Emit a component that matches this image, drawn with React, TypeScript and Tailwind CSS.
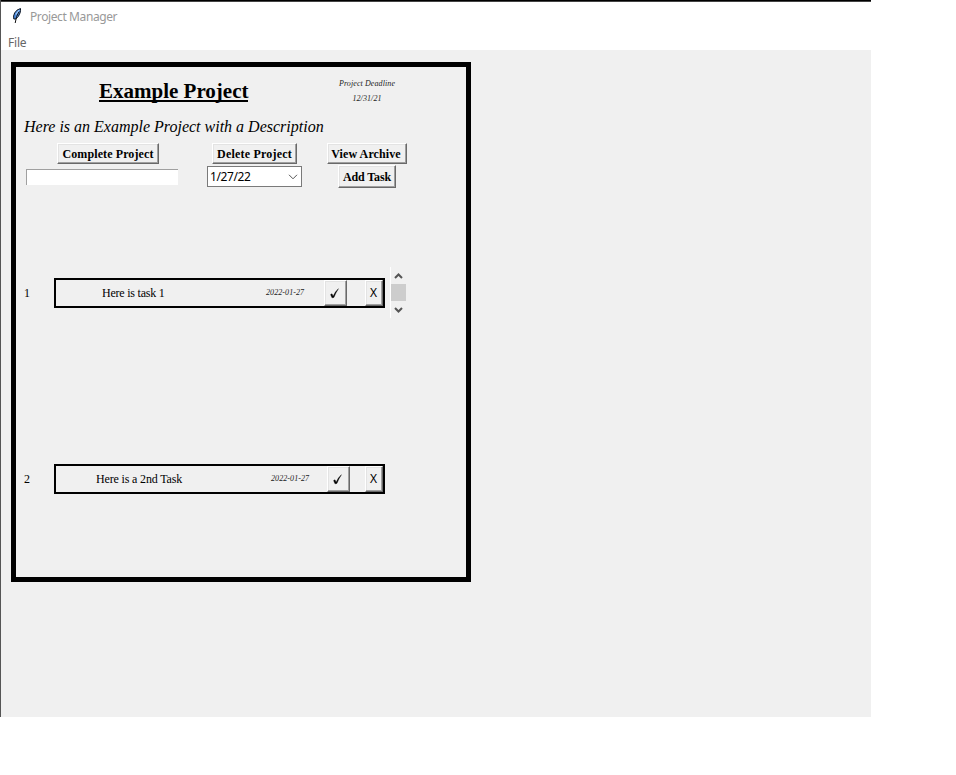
import type { ReactNode } from "react";

const serif = "font-['Liberation_Serif',serif]";
const sans = "font-['Noto_Sans','Open_Sans',sans-serif]";

function RaisedButton({ className, children }: { className: string; children: ReactNode }) {
  return (
    <button
      className={`flex shrink-0 items-center justify-center border border-t-white border-l-white border-r-[#696969] border-b-[#696969] bg-[#f0f0f0] whitespace-nowrap text-black shadow-[inset_-1px_-1px_0_#a0a0a0,inset_1px_1px_0_#e3e3e3] ${className}`}
    >
      {children}
    </button>
  );
}

function Check() {
  return (
    <svg width="9" height="11" viewBox="0 0 9 11" fill="none" className="mr-[2px] shrink-0">
      <path d="M.6 6.6 L2 5.8 L3.1 8.2 Q5.2 3.4 8.4 .7 Q5.8 4.6 3.9 9.4 L2 9.8 Z" fill="#000" stroke="#000" strokeWidth=".4" />
    </svg>
  );
}

interface TaskProps {
  index: number;
  name: string;
  nameClass: string;
  dateClass: string;
  checkClass: string;
  gapClass: string;
}

function TaskRow({ index, name, nameClass, dateClass, checkClass, gapClass }: TaskProps) {
  return (
    <div className="flex h-[30px]">
      <span className={`w-[30px] shrink-0 text-[12px] leading-[30px] ${serif}`}>{index}</span>
      <div className="flex h-[30px] w-[331px] shrink-0 border-2 border-black">
        <span className={`shrink-0 text-[12px] leading-[27px] whitespace-nowrap ${serif} ${nameClass}`}>{name}</span>
        <span className={`shrink-0 text-[8px] leading-[25px] tracking-[0.08px] whitespace-nowrap text-[#222] italic ${serif} ${dateClass}`}>
          2022-01-27
        </span>
        <RaisedButton className={`h-[26px] w-[23px] ${checkClass}`}>
          <Check />
        </RaisedButton>
        <RaisedButton className={`h-[26px] w-[18px] pr-px text-[12px] ${sans} ${gapClass}`}>X</RaisedButton>
      </div>
    </div>
  );
}

function ScrollBar() {
  return (
    <div className="-mt-[11px] ml-[5px] flex h-[51px] w-[16px] shrink-0 flex-col items-center border-l border-white">
      <svg width="15" height="17" viewBox="0 0 15 17" fill="none" stroke="#555" strokeWidth="2">
        <path d="M4 11 L7.5 7.5 L11 11" />
      </svg>
      <div className="h-[17px] w-full bg-[#cdcdcd]" />
      <svg width="15" height="17" viewBox="0 0 15 17" fill="none" stroke="#555" strokeWidth="2">
        <path d="M4 7 L7.5 10.5 L11 7" />
      </svg>
    </div>
  );
}

function Feather() {
  return (
    <svg width="12" height="17" viewBox="0 0 12 17" fill="none">
      <path d="M9.5 1.5 Q5.5 2.5 3.6 6 Q2 9 2.8 12 L4.8 12 Q8 9.5 9 6 Q9.8 3.5 9.5 1.5 Z" fill="#4b8be0" stroke="#0c1420" strokeWidth="1" />
      <path d="M8 4.5 Q5 9 4.2 16" stroke="#111" strokeWidth="1" />
      <path d="M8.2 3 L4.8 7.5" stroke="#a6ccf5" strokeWidth="1.1" />
    </svg>
  );
}

export default function App() {
  return (
    <div className="h-[775px] w-[956px] overflow-hidden bg-white text-black">
      <div className="flex h-[717px] w-[871px] flex-col border-l border-l-[#555] bg-[#f0f0f0]">
        <div className="h-px shrink-0 bg-black" />
        <div className="h-px shrink-0 bg-[#444]" />
        <header className={`h-[48px] shrink-0 bg-white text-[12px] ${sans}`}>
          <div className="flex h-[30px] pt-[5px] pl-[10px]">
            <Feather />
            <span className="ml-[7px] leading-[20px] tracking-[-0.4px] text-[#999]">Project Manager</span>
          </div>
          <div className="pl-[7px] leading-[21px] tracking-[-0.2px] text-[#666]">File</div>
        </header>
        <main className="pt-[12px] pl-[10px]">
          <section className="h-[520px] w-[460px] border-5 border-black">
            <div className="flex h-[48px]">
              <h1 className={`mt-[13px] ml-[83px] h-[22px] w-[149px] shrink-0 border-b-2 border-black text-[21px] leading-[22px] font-bold whitespace-nowrap ${serif}`}>
                Example Project
              </h1>
              <div className={`ml-[71px] w-[96px] shrink-0 pt-[9px] text-center text-[8px] leading-[15px] tracking-[0.1px] text-[#222] italic ${serif}`}>
                <p>Project Deadline</p>
                <p>12/31/21</p>
              </div>
            </div>
            <p className={`h-[28px] pl-[8px] text-[16px] leading-[24px] whitespace-nowrap italic ${serif}`}>
              Here is an Example Project with a Description
            </p>
            <div className={`flex h-[22px] text-[12px] font-bold ${serif}`}>
              <RaisedButton className="ml-[41px] h-[21px] w-[102px] pt-px tracking-[0.1px]">Complete Project</RaisedButton>
              <RaisedButton className="ml-[53px] h-[21px] w-[85px] pt-px tracking-[0.2px]">Delete Project</RaisedButton>
              <RaisedButton className="ml-[30px] h-[21px] w-[80px] pt-px pr-[2px] tracking-[0.1px]">View Archive</RaisedButton>
            </div>
            <div className="flex h-[113px] items-start">
              <input className="mt-[4px] ml-[10px] h-[16px] w-[152px] shrink-0 border-t border-l border-[#a0a0a0] bg-white outline-none" />
              <div className={`mt-px ml-[29px] flex h-[21px] w-[95px] shrink-0 items-center justify-between border border-[#7a7a7a] bg-white pr-[3px] pl-[2px] text-[12px] tracking-[-0.4px] ${sans}`}>
                <span>1/27/22</span>
                <svg width="10" height="6" viewBox="0 0 10 6" fill="none" stroke="#555">
                  <path d="M1 .8 L5 4.8 L9 .8" />
                </svg>
              </div>
              <RaisedButton className={`ml-[36px] h-[23px] w-[58px] pt-px text-[12px] font-bold tracking-[-0.1px] ${serif}`}>Add Task</RaisedButton>
            </div>
            <div className="flex h-[186px] pl-[8px]">
              <TaskRow index={1} name="Here is task 1" nameClass="ml-[46px] w-[63px] tracking-[-0.22px]" dateClass="ml-[101px] w-[39px]" checkClass="ml-[19px]" gapClass="ml-[18px]" />
              <ScrollBar />
            </div>
            <div className="pl-[8px]">
              <TaskRow index={2} name="Here is a 2nd Task" nameClass="ml-[40px] w-[86px] tracking-[-0.16px]" dateClass="ml-[89px] w-[39px]" checkClass="ml-[17px]" gapClass="ml-[15px]" />
            </div>
          </section>
        </main>
      </div>
    </div>
  );
}
